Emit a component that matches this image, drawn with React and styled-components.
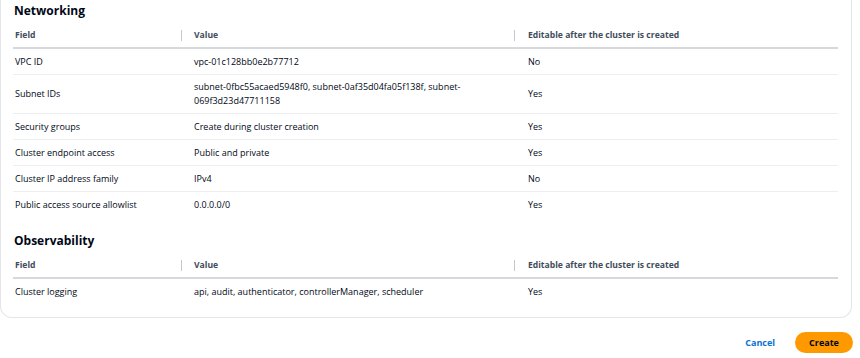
import React from 'react'
import styled, { createGlobalStyle } from 'styled-components'

const Global = createGlobalStyle`
  html, body {
    margin: 0;
    padding: 0;
    background: #ffffff;
  }
  body {
    font-family: "Open Sans", "Noto Sans", sans-serif;
    color: #000716;
  }
`

const Page = styled.div`
  width: 860px;
  height: 358px;
  overflow: hidden;
`

const Card = styled.div`
  width: 852px;
  box-sizing: border-box;
  border: 1px solid #e3e5e8;
  border-top: none;
  border-radius: 0 0 12px 12px;
  padding: 0 13px 13px 12px;
`

const Heading = styled.h2`
  margin: ${p => (p.first ? '0' : '13px 0 0')};
  padding-left: 1px;
  font-size: 12px;
  line-height: 22px;
  height: 23px;
  font-weight: 700;
  color: #000716;
`

const Grid = styled.div`
  display: grid;
  grid-template-columns: 168px 333px 1fr;
  font-size: 9px;
`

const HeadCell = styled.div`
  position: relative;
  height: 24px;
  display: flex;
  align-items: center;
  padding-left: ${p => p.pad}px;
  font-size: 8.6px;
  font-weight: 700;
  color: #414d5c;
  border-bottom: 2px solid #d5d8dc;

  ${p => p.divider && `
    &::before {
      content: '';
      position: absolute;
      left: 0;
      top: 7px;
      height: 11px;
      width: 1px;
      background: #c6c6cd;
    }
  `}
`

const Cell = styled.div`
  min-height: 25px;
  display: flex;
  align-items: center;
  padding: ${p => (p.tall ? '5px' : '0')} 12px ${p => (p.tall ? '5px' : '0')} ${p => p.pad}px;
  line-height: 14px;
  color: #000716;
  border-bottom: ${p => (p.last ? 'none' : '1px solid #eceef0')};
`

const Footer = styled.div`
  width: 853px;
  display: flex;
  justify-content: flex-end;
  align-items: center;
  gap: 8px;
  padding-top: 14px;
`

const LinkButton = styled.button`
  border: none;
  background: none;
  padding: 0 12px;
  height: 21px;
  font-family: inherit;
  font-size: 9px;
  font-weight: 700;
  color: #0972d3;
`

const PrimaryButton = styled.button`
  border: none;
  background: #ff9900;
  border-radius: 11px;
  width: 58px;
  height: 21px;
  font-family: inherit;
  font-size: 9px;
  font-weight: 700;
  color: #000716;
`

const networking = [
  ['VPC ID', 'vpc-01c128bb0e2b77712', 'No'],
  ['Subnet IDs', 'subnet-0fbc55acaed5948f0, subnet-0af35d04fa05f138f, subnet-069f3d23d47711158', 'Yes'],
  ['Security groups', 'Create during cluster creation', 'Yes'],
  ['Cluster endpoint access', 'Public and private', 'Yes'],
  ['Cluster IP address family', 'IPv4', 'No'],
  ['Public access source allowlist', '0.0.0.0/0', 'Yes'],
]

const observability = [
  ['Cluster logging', 'api, audit, authenticator, controllerManager, scheduler', 'Yes'],
]

const pads = [2, 13, 14]

const Table = ({ rows }) =>
  <Grid>
    <HeadCell pad={pads[0]}>Field</HeadCell>
    <HeadCell pad={pads[1]} divider>Value</HeadCell>
    <HeadCell pad={pads[2]} divider>Editable after the cluster is created</HeadCell>
    {rows.map((row, i) =>
      row.map((text, j) =>
        <Cell
          key={`${i}-${j}`}
          pad={pads[j]}
          tall={row[1].length > 60}
          last={i === rows.length - 1}>
          {text}
        </Cell>
      )
    )}
  </Grid>

export default function App() {
  return (
    <Page>
      <Global />
      <Card>
        <Heading first>Networking</Heading>
        <Table rows={networking} />
        <Heading>Observability</Heading>
        <Table rows={observability} />
      </Card>
      <Footer>
        <LinkButton>Cancel</LinkButton>
        <PrimaryButton>Create</PrimaryButton>
      </Footer>
    </Page>
  )
}
